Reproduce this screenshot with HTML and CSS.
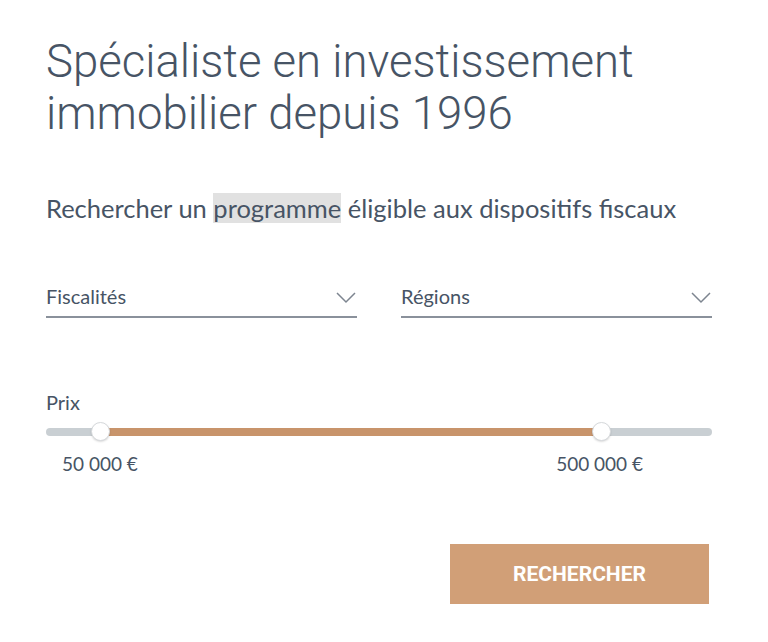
FILE: index.html
```html
<!DOCTYPE html>
<html>
	<head>
		<meta charset="UTF-8">
		<title>Recherche</title>
		<link rel="stylesheet" href="styles.css">
	</head>
	<body>
		<section class="search">
			<h1 class="title">Spécialiste en investissement immobilier depuis 1996</h1>
			<p class="lead">Rechercher un <span class="mark">programme</span> éligible aux dispositifs fiscaux</p>
			<div class="selects">
				<div class="select">
					<span>Fiscalités</span>
					<svg width="20" height="12" viewBox="0 0 20 12"><path d="M1 1 L10 10 L19 1" fill="none" stroke="#7d8590" stroke-width="1.5"/></svg>
				</div>
				<div class="select">
					<span>Régions</span>
					<svg width="20" height="12" viewBox="0 0 20 12"><path d="M1 1 L10 10 L19 1" fill="none" stroke="#7d8590" stroke-width="1.5"/></svg>
				</div>
			</div>
			<div class="price">
				<label>Prix</label>
				<div class="track">
					<div class="range" style="left:54px;width:501px"></div>
					<i class="knob" style="left:54px"></i>
					<i class="knob" style="left:555px"></i>
				</div>
				<div class="values">
					<span>50 000 €</span>
					<span>500 000 €</span>
				</div>
			</div>
			<div class="actions">
				<button class="btn">RECHERCHER</button>
			</div>
		</section>
	</body>
</html>
```

FILE: styles.css
```css
body{
	margin: 0;
	background: #fff;
	color: #475465;
	font-family: "Lato", "Liberation Sans", sans-serif;
}
.search{
	width: 666px;
	margin-left: 46px;
	padding-top: 36px;
}
.title{
	font: 300 45.5px/52px "Roboto", "Liberation Sans", sans-serif;
	margin: 0;
	color: #475465;
}
.lead{
	font-size: 25.5px;
	line-height: 30px;
	margin: 53px 0 0;
}
.mark{
	background: #e1e1e1;
}
.selects{
	display: flex;
	gap: 44px;
	margin-top: 53px;
}
.select{
	flex: 1;
	display: flex;
	justify-content: space-between;
	align-items: center;
	height: 40px;
	border-bottom: 2px solid #8a919b;
	font-size: 20px;
	padding-right: 1px;
}
.select svg{
	margin-top: 4px;
}
.price{
	margin-top: 72px;
}
.price label{
	display: block;
	font-size: 20px;
	line-height: 24px;
}
.track{
	position: relative;
	height: 8px;
	border-radius: 4px;
	background: #c9cfd3;
	margin-top: 14px;
}
.range{
	position: absolute;
	top: 0;
	height: 8px;
	background: #c8946b;
}
.knob{
	position: absolute;
	top: -6px;
	width: 19px;
	height: 19px;
	margin-left: -9.5px;
	border-radius: 50%;
	background: #fff;
	border: 1px solid #d6d9dc;
	box-sizing: border-box;
	box-shadow: 0 1px 2px rgba(0,0,0,0.15);
}
.values{
	display: flex;
	justify-content: space-between;
	padding: 0 69px 0 16px;
	margin-top: 16px;
	font-size: 19px;
	line-height: 24px;
}
.actions{
	display: flex;
	justify-content: flex-end;
	margin-top: 68px;
	padding-right: 3px;
}
.btn{
	width: 259px;
	height: 60px;
	border: 0;
	background: #d19f77;
	color: #fff;
	font: 700 21px "Roboto", "Liberation Sans", sans-serif;
}
```
